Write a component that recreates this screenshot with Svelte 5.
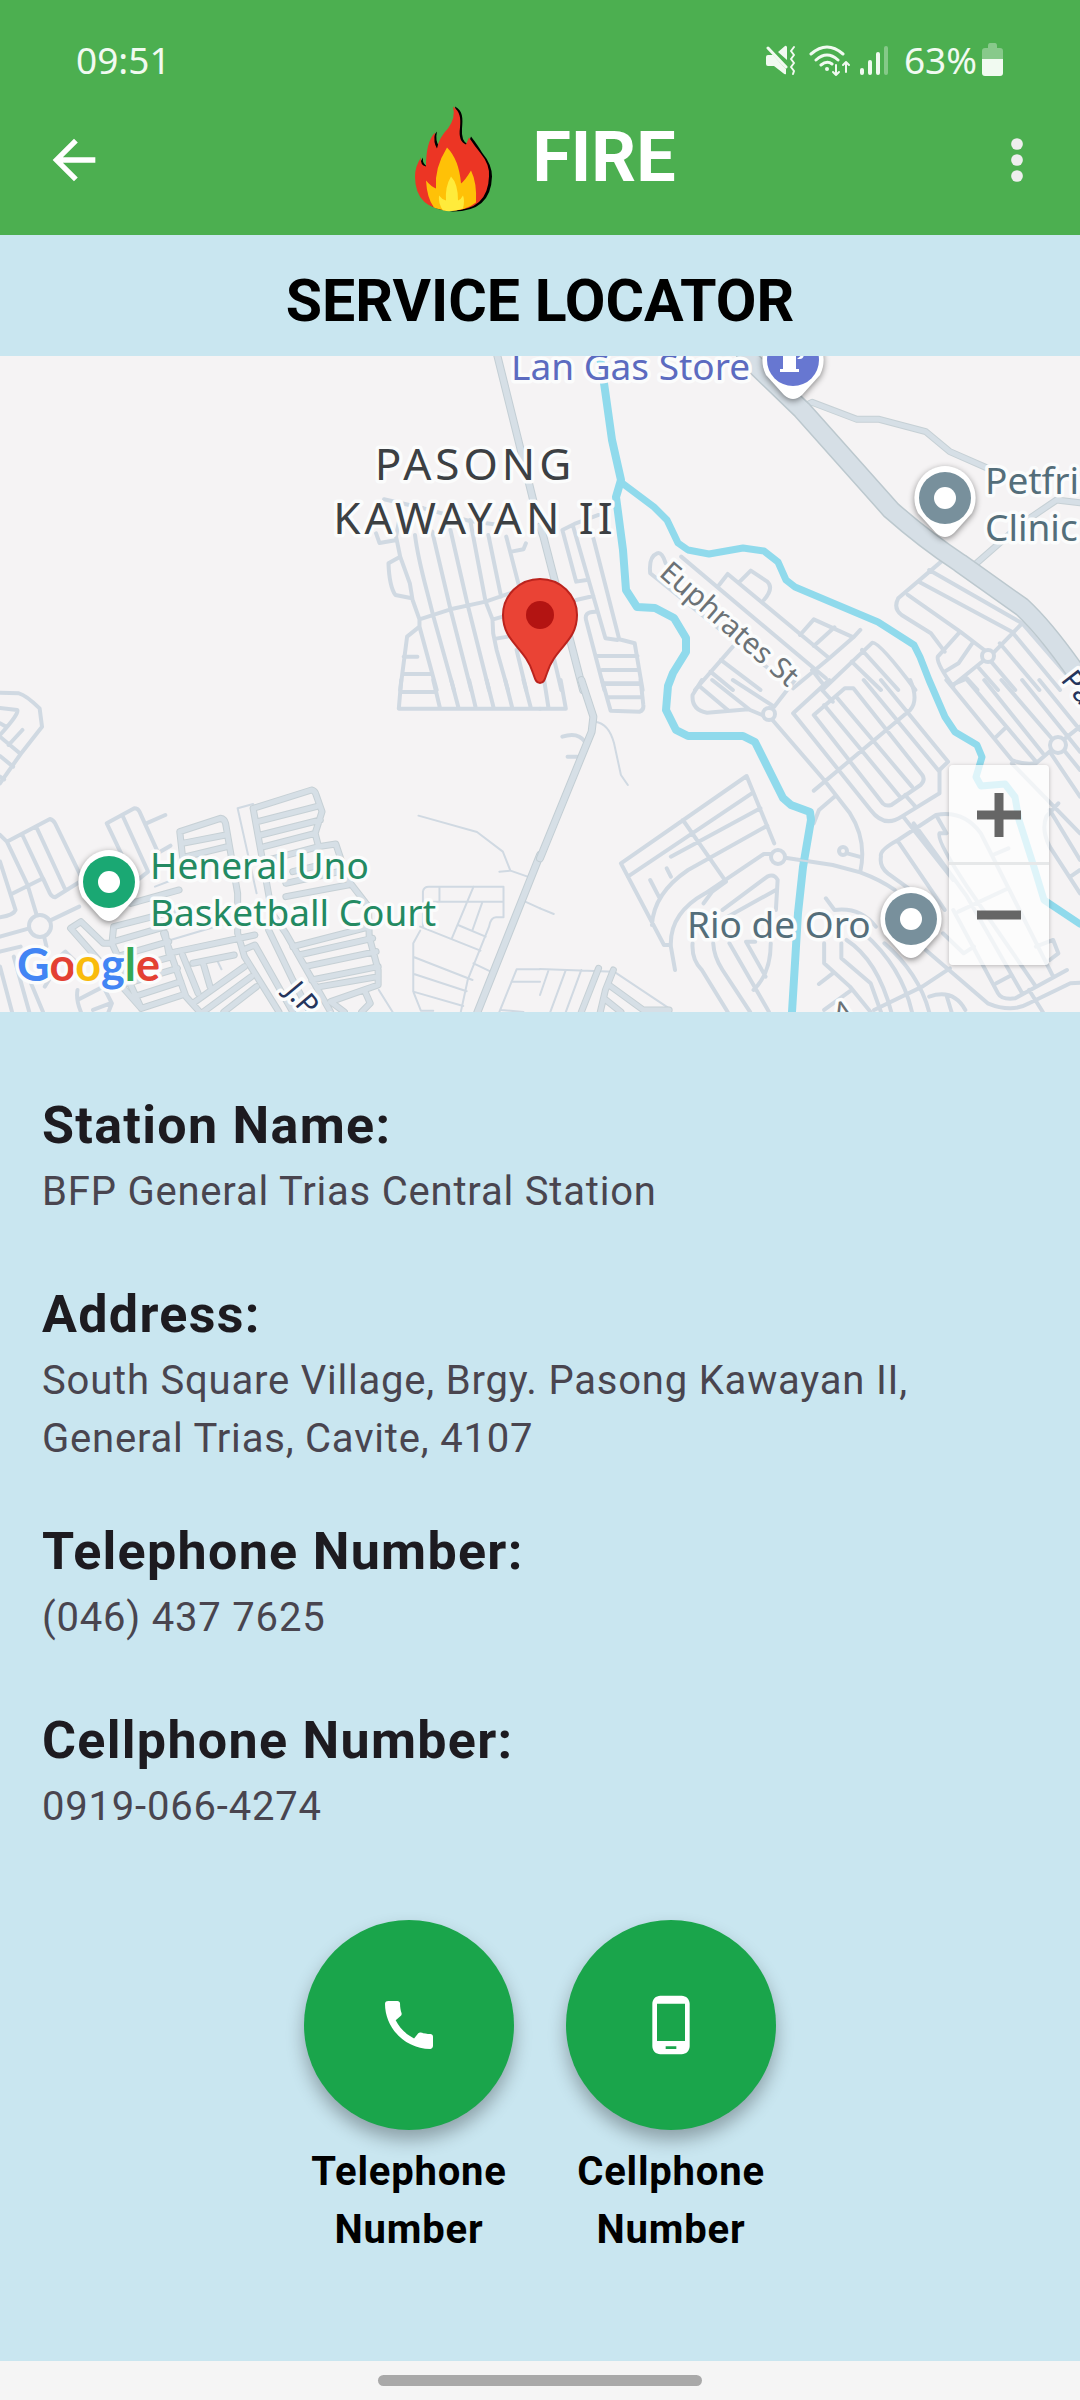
<script>
  const station = [
    { label: 'Station Name:', value: 'BFP General Trias Central Station' },
    { label: 'Address:', value: 'South Square Village, Brgy. Pasong Kawayan II, General Trias, Cavite, 4107' },
    { label: 'Telephone Number:', value: '(046) 437 7625' },
    { label: 'Cellphone Number:', value: '0919-066-4274' },
  ];

  const actions = [
    {
      label: 'Telephone Number',
      icon: 'M20.01 15.38c-1.23 0-2.42-.2-3.53-.56-.35-.12-.74-.03-1.01.24l-1.57 1.97c-2.83-1.35-5.48-3.9-6.89-6.83l1.95-1.66c.27-.28.35-.67.24-1.02-.37-1.11-.56-2.3-.56-3.53 0-.54-.45-.99-.99-.99H4.19C3.65 3 3 3.24 3 3.99 3 13.28 10.73 21 20.01 21c.71 0 .99-.63.99-1.18v-3.45c0-.54-.45-.99-.99-.99z',
    },
    {
      label: 'Cellphone Number',
      icon: 'M16 1H8C6.34 1 5 2.34 5 4v16c0 1.66 1.34 3 3 3h8c1.66 0 3-1.34 3-3V4c0-1.66-1.34-3-3-3zm-2 20h-4v-1h4v1zm3.25-3H6.75V4h10.5v14z',
    },
  ];

  // The map is stored as four tiles, each with its own drawing grid.
  const tiles = [
    {
      place: 'translate(0 -6) scale(.3444 .3333)',
      minor:
        'M1115 448L1230 475L1360 512L1450 525M1092 550L1102 579L1152 570M1160 505L1150 560L1162 620L1190 700L1198 750L1218 808V830L1268 1020M1162 620L1128 640C1130 700 1138 720 1148 735L1196 745M1205 555C1215 640 1235 700 1258 798L1318 1020M1255 545L1308 778L1368 1020M1308 540L1358 765L1420 1020M1365 510L1410 755L1430 808L1432 850L1442 900L1475 1020M1418 555L1455 740M1470 560L1510 720M1485 605L1520 598L1527 580M1455 515V482M1218 808L1308 778L1410 755L1480 730M1218 830L1182 860L1162 1020M1172 920H1212M1168 972H1252M1432 808L1460 800M1440 866L1475 860M1500 900L1528 1020',
      thin: '',
      street: '',
      road: 'M1440 0L1560 500',
    },
    {
      place: 'translate(540 -6) scale(.3444 .3333)',
      minor:
        'M170 495L100 522L65 540L105 695L135 690M95 525L190 865L225 870M155 565L230 868L275 880L298 1020M105 750L155 738M160 785Q125 785 135 815L187 1020M165 918H283M180 960H288M187 1000H293M30 880L62 1020M365 640Q355 605 340 610Q315 620 320 670L735 1015M410 620L830 985M520 705L545 672L840 925M580 695L612 662L660 695Q680 715 650 750M755 855L795 808L910 862L930 840M795 888L855 832M840 925L735 1015M910 862L840 925M560 890L450 1020M525 930L640 1020M495 965L560 1020M905 935L990 1020M935 900L1040 1020M790 960L820 1000M820 1020L965 878Q985 875 1090 1020M1165 635L1040 745Q1025 775 1050 795L1135 850L1175 905M1130 660L1400 820M1100 695L1370 845L1510 1020M1068 735L1220 845L1290 900M1400 820L1320 905M1220 845L1155 920Q1150 940 1200 1010M1255 880L1215 940L1175 965M1200 1005L1290 930M1235 980L1270 1020M1275 955L1330 1020M1310 935L1380 1020M1335 880L1450 1020M1400 820L1568 1020',
      thin: '',
      street: 'M755 175L790 157L920 208H985L1120 245L1190 305L1300 355M1262 645L1400 520L1500 450L1568 458',
      road: 'M0 530L10 560L125 1020',
    },
    {
      place: 'translate(0 324) scale(.3444 .3333)',
      minor:
        'M1165 0L1158 86H1568M1165 36H1265M1258 0L1278 86M1310 0L1332 86M1362 0L1382 86M1413 0L1434 86M1467 0L1488 86M1520 0L1542 86M0 38L55 40Q75 45 115 85L122 140L60 222L0 310M0 84L50 90Q58 98 0 165M0 130L18 140M0 170L60 222M25 195L65 150M0 228L38 260M0 290L12 298M0 465L20 485L145 417Q155 420 160 430L240 600L160 652Q150 650 145 640L65 465M105 440L190 630M20 485L80 615L105 700M38 640L125 595L145 640M0 545L45 690Q40 705 0 712M0 770L85 745M145 722L230 680M128 770L135 800M0 815L60 800M370 560L310 430L390 385Q400 385 405 395L460 520M355 405L430 575L400 600M425 430L480 405M465 515L495 497M0 860L35 996M40 830L85 996M90 910L125 996M160 870L130 920M225 930Q220 960 235 996M225 960L300 920L325 970L315 996M270 990L320 970M150 850L190 815L225 850',
      thin:
        'M1215 407L1385 456L1460 515L1482 572L1532 590M1450 575L1482 572M1228 740V635Q1230 620 1245 620H1462V712H1440Q1425 712 1420 740L1358 900L1338 996M1276 620V665M1228 665H1462M1375 620L1312 775M1400 668L1372 750M1330 735L1410 770M1220 740L1395 812M1220 752L1200 790V935L1222 992H1258M1203 832L1372 900M1202 882L1355 934M1200 935L1345 978M1375 850L1425 875M1525 665L1568 685M1450 996L1500 868H1568M1485 905H1568M1455 990L1520 996M735 372L690 385L745 640M450 620L500 600M495 780L690 720M630 840L643 868M1100 930L1140 996',
      street:
        'M530 530L522 455L640 415Q652 417 655 430L690 640V760L710 830L810 996M530 490L655 465M540 530L660 500M735 385L905 330Q915 332 918 345L935 395L915 460L925 500L975 492L1010 600L1070 680L1072 770L1098 870V915L960 965M735 385L790 700L830 760L960 996M748 425L918 380M757 465L930 420M767 500L915 460M780 540L925 500M850 575L990 540M830 610L1005 570M830 650L1010 615M850 800L1075 740M868 825L1082 775M885 860L1092 815M905 900L1098 860M930 920L1098 890M410 985L205 745L235 725L300 790H325L330 740L520 690M325 790L410 985M330 785L480 740M340 830L490 785M360 870L500 830M370 910L515 865M390 950L525 905M410 985L530 945M380 670L520 630M475 760L540 950L580 996M480 760L490 820L740 765M560 850L680 825M530 825L575 940M590 850L610 920M560 970L710 860M590 996L730 890M650 996L745 920M705 810L740 795L850 996M780 750L850 900L900 996M960 965L1000 996M1060 935L1075 970L1050 996',
      road: 'M1568 525L1385 1000',
    },
    {
      place: 'translate(540 324) scale(.3444 .3333)',
      minor:
        'M180 0L205 92L290 95Q302 90 300 75L292 0M190 12H292M198 52H298M0 86H75L60 0M12 0L25 86M65 170Q110 155 130 185M80 230H108M470 0L443 45Q440 90 485 98L605 88M465 20L545 90M500 0L610 90L645 105M560 0L680 80L740 0M675 120L825 300L900 400Q950 480 930 575M795 332L1075 90Q1100 60 1075 0M735 100L840 0M735 100L960 390Q1000 445 1050 410L1160 340V270L1185 245L990 0M795 105L885 25H910L1110 285Q1120 300 1105 315L1020 375Q1005 380 995 370L795 105M825 75L1045 350M860 50L1080 320M940 0L1160 275M815 25L850 65M1060 345L1090 380M1180 0L1370 240Q1400 255 1440 250L1485 210M1195 15L1230 0M1240 0L1440 245M1290 0L1460 220M1340 0L1490 180M1400 0L1568 215M1450 0L1568 150M1320 175L1350 145M1525 175L1568 140M1525 215L1568 270M1480 215L1568 350M1505 370L1470 410Q1455 450 1480 500L1568 640M1480 390L1568 540M1370 250L1568 460M1540 590L1568 570M680 490L600 288L235 550L360 795H378M255 590L615 340M415 420L540 605M320 600L345 650M368 565L380 590M380 530L640 385M660 437L430 570Q330 640 325 735M675 522H650L480 640Q375 700 380 800L392 870M712 533L850 555L930 577Q990 600 1030 630M475 670L500 635L540 605M530 690L660 590Q680 580 690 600L685 690M545 710L685 630M443 790Q440 840 470 870L545 996M503 790Q505 830 530 870L610 996M550 790L665 996M625 785H598L655 890M670 790Q670 880 620 930M855 350L810 390L795 430M892 520L935 532M1055 410L1200 600M1070 625L1010 580Q985 560 990 530Q985 510 1040 480L1150 405Q1230 390 1280 460L1490 890M1040 485L1175 690M1085 430L1240 650L1400 940M1150 405L1180 460H1160Q1150 480 1240 620L1440 920M1215 695L1360 625M1315 525L1360 505M1440 800L1490 780L1505 820L1480 840M1530 870L1380 955Q1340 960 1330 940L1200 690M1325 910L1370 885M1170 760L1230 820L1260 800M1120 810L1300 970Q1370 1000 1420 970L1540 910L1568 908M830 655L855 690Q930 680 975 740M875 790V835L960 910L990 996M825 790V850L900 920L960 996M810 912L850 880M825 990L905 930M890 780Q980 840 1020 996M940 760Q1050 860 1080 996M1000 790Q1100 880 1130 996M970 990L1110 920L1190 865M1130 950Q1200 925 1235 990M1180 945L1195 996M1420 930L1460 996',
      thin:
        'M160 125Q200 130 215 190L235 285L255 315M0 867L215 875L375 985M25 870L0 945M75 870L30 996M120 870L75 996M0 685L40 702',
      street: 'M170 865L120 996M213 870L190 930L175 996M200 915L300 990H375M185 955L235 996',
      road: 'M120 0L155 110L150 155L0 535',
    },
  ];

  const roundabouts = [
    [988, 300, 6],
    [40, 570, 11],
    [769, 358, 6],
    [1058, 389, 8],
    [778, 501, 7],
    [843, 495, 4],
  ];
</script>

{#snippet poi(x, y, color)}
  <g transform="translate({x} {y})">
    <path class="poi-drop" d="M0-32A31 32 0 0 1 27 15L9 35Q0 43-9 35L-27 15A31 32 0 0 1 0-32Z" />
    <circle r="26" fill={color} />
  </g>
{/snippet}

<main class="screen">
  <header>
    <div class="status">
      <time>09:51</time>
      <div class="status-right">
        <svg width="126" height="34" viewBox="0 0 126 34" aria-hidden="true">
          <g fill="#f1faf1">
            <path d="M2 12H7L20 26V31Q19 32 17 30L8 23H2Q0 23 0 21V14Q0 12 2 12ZM12 9L19 3Q20 2 21 4V17Z" />
            <circle cx="61" cy="26" r="2" />
            <rect x="94" y="25" width="4" height="7" rx="2" />
            <rect x="102" y="17" width="4" height="15" rx="2" />
            <rect x="110" y="9" width="4" height="23" rx="2" />
            <rect x="118" y="3" width="4" height="29" rx="2" opacity=".35" />
          </g>
          <g fill="none" stroke="#f1faf1" stroke-width="3" stroke-linecap="round" stroke-linejoin="round">
            <path d="M2 5L20 24" />
            <path d="M28 4L25 8L28 12L25 16L28 20L25 24L28 28L27 31" stroke-width="2" />
            <path d="M45 11Q61-3 77 11M50 17Q61 7 72 17M55 22Q61 17 66 21" />
            <path d="M70 22V32M67 29L70 32L73 29M80 29V19M77 22L80 19L83 22" stroke-width="2" />
          </g>
        </svg>
        <span class="percent">63%</span>
        <svg width="22" height="34" viewBox="0 0 22 34" aria-hidden="true">
          <path d="M6 3Q6 0 8 0H13Q15 0 15 3V5H18Q21 5 21 8V16H0V8Q0 5 3 5H6Z" fill="#88c98b" />
          <path d="M0 16H21V30Q21 33 18 33H3Q0 33 0 30Z" fill="#f1faf1" />
        </svg>
      </div>
    </div>
    <div class="toolbar">
      <button class="icon-button" aria-label="Back">
        <svg viewBox="0 0 24 24"><path d="M20 11H7.83l5.59-5.59L12 4l-8 8 8 8 1.41-1.41L7.83 13H20v-2z" fill="#fff" /></svg>
      </button>
      <div class="brand">
        <svg class="flame" viewBox="0 0 77 106" aria-hidden="true">
          <path d="M40 0C48 4 48 12 47 22Q46 35 53 38L56 30Q63 39 67 46Q77 58 77 70Q76 105 38 105Q2 103 2 70Q2 60 8 51Q7 58 13 60Q13 35 22 25Q20 34 24 40Q26 30 35 21Q43 11 40 0Z" fill="#000" />
          <path d="M38 0C45 5 46 11 45 21Q43 35 51 38L54 31Q60 40 65 46Q75 58 74 70Q73 104 36 104Q0 103 0 70Q0 60 6 51Q5 59 11 60Q11 35 20 26Q18 36 22 42Q24 31 33 22Q41 11 38 0Z" fill="#ec3524" />
          <path d="M32 41Q44 53 46 77Q50 74 56 64Q62 76 61 96Q51 104 36 104Q26 104 19 101Q12 92 11 74Q16 80 21 82Q19 62 32 41Z" fill="#ffc107" />
          <path d="M36 70Q43 77 43 94Q46 93 48 89Q50 94 48 102Q38 106 28 104Q23 97 24 89Q27 93 31 94Q30 80 36 70Z" fill="#ffeb3b" />
        </svg>
        <h1>FIRE</h1>
      </div>
      <button class="icon-button" aria-label="More options">
        <svg viewBox="0 0 24 24" fill="#eee"><circle cx="12" cy="6" r="2.2" /><circle cx="12" cy="12" r="2.2" /><circle cx="12" cy="18" r="2.2" /></svg>
      </button>
    </div>
  </header>

  <h2>SERVICE LOCATOR</h2>

  <section class="map" aria-label="Station map">
    <svg class="map-art" viewBox="0 0 1080 656" preserveAspectRatio="xMidYMid slice">
      {#each tiles as tile}
        <g transform={tile.place}>
          <path class="minor" d={tile.minor} />
          <path class="thin" d={tile.thin} />
          <path class="street-edge" d={tile.street} />
          <path class="street" d={tile.street} />
          <path class="road-edge" d={tile.road} />
          <path class="road" d={tile.road} />
        </g>
      {/each}
      {#each roundabouts as [cx, cy, r]}
        <circle class="roundabout" {cx} {cy} {r} />
      {/each}
      <g class="river">
        <path stroke-width="8" d="M600 0L605 34L612 84L621 124L616 141L623 194L626 234L637 251L655 252L674 262L686 282V296L673 317L668 330L666 354L676 374L688 380H743L755 386L783 442L791 449L810 456L811 464L803 511L798 557L795 607L792 656" />
        <path stroke-width="7" d="M622 127L654 151L667 164L678 187L688 194L709 198L743 192L764 195L778 206L786 224L795 231L878 266L914 289L920 301L929 324L945 361L955 376L977 389L982 401L976 421L981 430L1005 428L1015 441L1019 464L1034 511L1044 544L1080 568" />
      </g>
      <path class="thin" d="M785 502L833 509" />
      <path class="highway-edge" d="M746 0L802 54L891 154Q925 184 960 207L1022 251Q1050 277 1088 334" />
      <path class="highway" d="M746 0L802 54L891 154Q925 184 960 207L1022 251Q1050 277 1088 334" />

      {@render poi(793, 4, '#6777d1')}
      <path d="M783-10H796V13H799V16H780V13H783ZM797 3H800Q804 3 804-3" fill="#fff" />
      {@render poi(945, 142, '#78909c')}
      {@render poi(109, 526, '#1aa873')}
      {@render poi(911, 563, '#78909c')}
      <g fill="#fff"><circle cx="945" cy="142" r="11" /><circle cx="109" cy="526" r="11" /><circle cx="911" cy="563" r="11" /></g>

      <g class="place">
        <text x="511" y="24" fill="#5c6bc0">Lan Gas Store</text>
        <text x="985" y="138" fill="#546e7a">Petfriends</text>
        <text x="985" y="185" fill="#546e7a">Clinic</text>
        <text x="150" y="523" fill="#238a62">Heneral Uno</text>
        <text x="150" y="570" fill="#238a62">Basketball Court</text>
        <text x="687" y="582" fill="#546e7a">Rio de Oro</text>
      </g>
      <g class="district">
        <text x="475" y="124">PASONG</text>
        <text x="475" y="178">KAWAYAN II</text>
      </g>
      <g class="road-name">
        <text transform="translate(658 219) rotate(41)" fill="#6b7276">Euphrates St</text>
        <text transform="translate(284 636) rotate(50)" fill="#25355c">J.P. Rizal</text>
        <text transform="translate(1060 324) rotate(52)" fill="#25355c">Pa</text>
        <text transform="translate(836 668) rotate(-14)" fill="#6b7276">A</text>
      </g>

      <path d="M540 327C536 327 535 323 533 317C525 291 503 286 503 259A37 36 0 0 1 577 259C577 286 555 291 547 317C545 323 544 327 540 327Z" fill="#ea4335" stroke="#bb231d" stroke-width="2" />
      <circle cx="540" cy="259" r="14" fill="#b31412" />

      <text class="logo" x="17" y="625"><tspan fill="#4285f4">G</tspan><tspan fill="#e34133">o</tspan><tspan fill="#f9bb0d">o</tspan><tspan fill="#4285f4">g</tspan><tspan fill="#34a853">l</tspan><tspan fill="#e34133">e</tspan></text>
    </svg>
    <div class="zoom">
      <button aria-label="Zoom in"><svg viewBox="0 0 44 44"><path d="M22 0V44M0 22H44" /></svg></button>
      <button aria-label="Zoom out"><svg viewBox="0 0 44 44"><path d="M0 22H44" /></svg></button>
    </div>
  </section>

  <dl>
    {#each station as row}
      <div class="row">
        <dt>{row.label}</dt>
        <dd>{row.value}</dd>
      </div>
    {/each}
  </dl>

  <div class="actions">
    {#each actions as action}
      <button class="action">
        <span class="disc"><svg viewBox="0 0 24 24" aria-hidden="true"><path d={action.icon} fill="#fff" /></svg></span>
        <span>{action.label}</span>
      </button>
    {/each}
  </div>

  <div class="gesture"><span></span></div>
</main>

<style>
  :global(body) { margin: 0; }
  .screen {
    display: flex;
    flex-direction: column;
    min-height: 100vh;
    background: #c9e6f0;
    color: #000;
    font-family: Roboto, sans-serif;
  }
  button { border: 0; padding: 0; background: none; font: inherit; color: inherit; cursor: pointer; }
  svg { display: block; }

  header { background: #4caf50; color: #fff; padding-bottom: 21px; }
  .status {
    display: flex;
    justify-content: space-between;
    align-items: center;
    padding: 35px 76px 0;
    height: 50px;
    color: #f1faf1;
    font: 400 37px/50px 'Noto Sans', sans-serif;
  }
  .status-right { display: flex; align-items: center; }
  .percent { margin: 0 5px 0 12px; }
  .toolbar {
    display: grid;
    grid-template-columns: 64px 1fr 64px;
    align-items: center;
    padding: 20px 31px 0 42px;
  }
  .icon-button { width: 64px; height: 64px; }
  .brand { display: flex; justify-content: center; align-items: center; gap: 40px; }
  .flame { width: 77px; height: 109px; }
  h1 { margin: 0 0 6px; font-size: 70px; line-height: 80px; font-weight: 700; }
  h2 {
    margin: 0;
    padding: 31px 0 20px;
    text-align: center;
    font-size: 59px;
    line-height: 70px;
    font-weight: 700;
  }

  .map { position: relative; height: 656px; background: #f5f3f4; overflow: hidden; }
  .map-art { width: 100%; height: 100%; }
  .map-art path { vector-effect: non-scaling-stroke; stroke-linejoin: round; }
  .minor, .thin, .street, .street-edge, .road, .road-edge, .highway, .highway-edge, .roundabout, .river { fill: none; stroke-linecap: round; }
  .minor, .roundabout { stroke: #d0d9e2; stroke-width: 4px; }
  .roundabout { fill: #f5f3f4; }
  .thin { stroke: #d0d9e2; stroke-width: 2px; }
  .street-edge { stroke: #c6d0d5; stroke-width: 7px; }
  .street { stroke: #d6dfe6; stroke-width: 5px; }
  .road-edge { stroke: #c3ced4; stroke-width: 8px; }
  .road { stroke: #d6dfe6; stroke-width: 6px; }
  .highway-edge { stroke: #bcc8ce; stroke-width: 20px; }
  .highway { stroke: #d6dfe6; stroke-width: 17px; }
  .river { stroke: #90daec; }
  .poi-drop { fill: #fff; filter: drop-shadow(0 2px 3px rgb(0 0 0 / 45%)); }
  .map-art text { stroke: #fbfcfc; stroke-width: 7px; stroke-linejoin: round; paint-order: stroke; }
  .place { font: 400 37px 'Noto Sans', sans-serif; }
  .district { font: 400 44px 'Noto Sans', sans-serif; letter-spacing: 4px; text-anchor: middle; fill: #3c4043; }
  .road-name { font: 400 29px 'Noto Sans', sans-serif; }
  .logo { font: 700 45px Lato, sans-serif; }
  .zoom {
    position: absolute;
    right: 31px;
    top: 409px;
    width: 100px;
    border-radius: 4px;
    background: rgb(255 255 255 / 70%);
    box-shadow: 0 1px 4px rgb(0 0 0 / 25%);
  }
  .zoom button { display: grid; place-items: center; width: 100%; height: 100px; }
  .zoom button + button { box-shadow: 0 -3px #e6e8e9; }
  .zoom svg { width: 44px; height: 44px; }
  .zoom path { stroke: #666; stroke-width: 9px; }

  dl { margin: 0; padding: 77px 42px 0; }
  .row { min-height: 189px; padding-bottom: 47px; box-sizing: border-box; }
  dt { color: #1d1b20; font-size: 52px; line-height: 74px; font-weight: 700; letter-spacing: 0.025em; }
  dd { margin: 0; color: #49454f; font-size: 40px; line-height: 58px; letter-spacing: 0.02em; }

  .actions { display: flex; justify-content: center; gap: 52px; padding: 27px 42px 0; }
  .action { display: flex; flex-direction: column; gap: 13px; width: 210px; font-size: 40px; line-height: 58px; font-weight: 700; letter-spacing: 0.02em; }
  .disc {
    display: grid;
    place-items: center;
    width: 210px;
    height: 210px;
    border-radius: 50%;
    background: #1aa54b;
    box-shadow: 0 10px 18px rgb(0 0 0 / 30%);
  }
  .disc svg { width: 64px; height: 64px; }

  .gesture { margin-top: auto; display: flex; justify-content: center; padding: 14px 0; background: #f5f5f5; }
  .gesture span { width: 30%; height: 11px; border-radius: 6px; background: #a9a9a9; }
</style>
